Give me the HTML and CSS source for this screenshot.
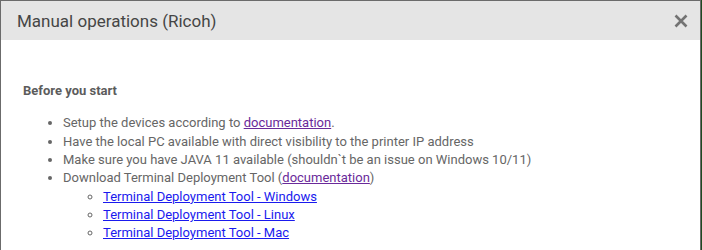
FILE: index.html
```html
<!DOCTYPE html>
<html>
<head>
<meta charset="utf-8">
<link rel="stylesheet" href="styles.css">
</head>
<body>
<div class="modal">
  <div class="modal-header">
    <h4 class="modal-title">Manual operations (Ricoh)</h4>
    <svg class="close" width="14" height="14" viewBox="0 0 14 14"><path d="M1.5 1.5 L12.5 12.5 M12.5 1.5 L1.5 12.5" stroke="#737373" stroke-width="2.6" stroke-linecap="butt"/></svg>
  </div>
  <div class="modal-body">
    <p class="lead">Before you start</p>
    <ul class="steps">
      <li>Setup the devices according to <a class="visited" href="#">documentation</a>.</li>
      <li>Have the local PC available with direct visibility to the printer IP address</li>
      <li>Make sure you have JAVA 11 available (shouldn`t be an issue on Windows 10/11)</li>
      <li>Download Terminal Deployment Tool (<a class="visited" href="#">documentation</a>)
        <ul class="sub">
          <li><a class="link" href="#">Terminal Deployment Tool - Windows</a></li>
          <li><a class="link" href="#">Terminal Deployment Tool - Linux</a></li>
          <li><a class="link" href="#">Terminal Deployment Tool - Mac</a></li>
        </ul>
      </li>
    </ul>
  </div>
</div>
</body>
</html>
```
FILE: styles.css
```css
html, body {
  margin: 0;
  padding: 0;
}
body {
  background: #1f4a22;
  width: 702px;
  height: 250px;
  overflow: hidden;
  font-family: Roboto, "Liberation Sans", sans-serif;
}
.modal {
  width: 699px;
  height: 249px;
  background: #fff;
  border-top: 1px solid #6b6b6b;
  border-left: 1px solid #6b6b6b;
  border-right: 1px solid #6b6b6b;
}
.modal-header {
  height: 39px;
  background: #e5e5e5;
  display: flex;
  align-items: center;
  justify-content: space-between;
  padding: 0 12px 0 16px;
}
.modal-title {
  margin: 0;
  font-size: 17px;
  font-weight: 400;
  color: #454545;
  line-height: 20px;
}
.close {
  display: block;
  margin-top: 1px;
}
.modal-body {
  padding: 42px 0 0 22px;
  font-size: 13px;
  line-height: 18.33px;
  color: #666;
}
.lead {
  margin: 0 0 14px 0;
  font-weight: 700;
  color: #5c5c5c;
}
.steps {
  margin: 0;
  padding-left: 40px;
}
.sub {
  margin: 0;
  padding-left: 40px;
  list-style-type: circle;
}
a.visited {
  color: #6a2a9a;
}
a.link {
  color: #1a1aee;
}
```
